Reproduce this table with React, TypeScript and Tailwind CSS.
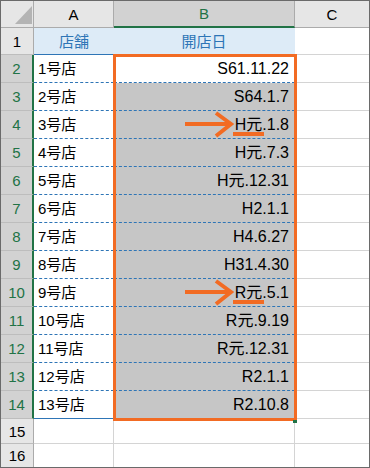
import React from 'react'

type Row = { store: string; date: string; marked?: boolean }

const ROWS: Row[] = [
  { store: '1号店', date: 'S61.11.22' },
  { store: '2号店', date: 'S64.1.7' },
  { store: '3号店', date: 'H元.1.8', marked: true },
  { store: '4号店', date: 'H元.7.3' },
  { store: '5号店', date: 'H元.12.31' },
  { store: '6号店', date: 'H2.1.1' },
  { store: '7号店', date: 'H4.6.27' },
  { store: '8号店', date: 'H31.4.30' },
  { store: '9号店', date: 'R元.5.1', marked: true },
  { store: '10号店', date: 'R元.9.19' },
  { store: '11号店', date: 'R元.12.31' },
  { store: '12号店', date: 'R2.1.1' },
  { store: '13号店', date: 'R2.10.8' },
]

// arrow + underline under the 元 era mark
function Marker() {
  return (
    <svg className="absolute left-[71px] top-0" width="82" height="28" viewBox="0 0 82 28">
      <line x1="0" y1="13" x2="45" y2="13" stroke="#f26b23" strokeWidth="4" />
      <polyline points="31,2 46,13 31,25" fill="none" stroke="#f26b23" strokeWidth="4" strokeLinejoin="miter" />
      <rect x="48" y="21" width="31" height="4" fill="#f26b23" />
    </svg>
  )
}

export default function App() {
  return (
    <div className="relative w-[370px] h-[468px] border border-[#6a6a6a] bg-white overflow-hidden font-['Liberation_Sans','Noto_Sans_CJK_JP',sans-serif] text-black">
      <div className="grid h-full grid-cols-[33px_80px_181px_1fr] grid-rows-[27px_27px_repeat(13,28px)_25px_1fr]">
        {/* column headers */}
        <div className="flex items-end justify-end pr-px pb-[3px] bg-[#e6e6e6] border-r border-b border-[#ababab]">
          <svg width="17" height="18" viewBox="0 0 17 18">
            <polygon points="17,0 17,18 0,18" fill="#b4b4b4" />
          </svg>
        </div>
        <div className="flex items-center justify-center bg-[#e6e6e6] border-r border-b border-[#ababab] text-[15px] leading-none">A</div>
        <div className="flex items-center justify-center bg-[#d2d2d2] border-r border-r-[#ababab] border-b-2 border-b-[#217346] text-[15px] leading-none text-[#217346]">B</div>
        <div className="flex items-center justify-center bg-[#e6e6e6] border-b border-[#ababab] text-[15px] leading-none">C</div>

        {/* row 1 */}
        <div className="flex items-center justify-center bg-[#e6e6e6] border-r border-r-[#ababab] border-b border-b-[#bdbdbd] text-[15px] leading-none">1</div>
        <div className="flex items-center justify-center bg-[#ddebf7] border-b border-b-[#2e75b6] text-[15px] leading-none text-[#2e75b6]">店舗</div>
        <div className="flex items-center justify-center bg-[#ddebf7] border-r border-r-[#ddebf7] border-b border-b-[#2e75b6] text-[15px] leading-none text-[#2e75b6]">開店日</div>
        <div className="border-b border-[#d4d4d4]" />

        {/* data rows 2-14 */}
        {ROWS.map((r, i) => {
          const last = i === ROWS.length - 1
          const line = last ? 'border-b border-solid border-b-[#2e75b6]' : 'border-b border-dashed border-b-[#2e75b6]'
          return (
            <React.Fragment key={i}>
              <div className="flex items-center justify-center bg-[#d2d2d2] border-r-2 border-r-[#217346] border-b border-b-[#bdbdbd] text-[15px] leading-none text-[#217346]">
                {i + 2}
              </div>
              <div className={`flex items-center pl-1 bg-white border-r border-r-[#d4d4d4] text-[15px] leading-none whitespace-nowrap ${line}`}>
                {r.store}
              </div>
              <div className={`relative flex items-center justify-end pr-[5px] border-r border-r-[#d4d4d4] text-[16px] leading-none whitespace-nowrap ${i === 0 ? 'bg-white' : 'bg-[#c6c6c6]'} ${line}`}>
                {r.marked && <Marker />}
                {r.date}
              </div>
              <div className="border-b border-[#d4d4d4]" />
            </React.Fragment>
          )
        })}

        {/* rows 15-16 */}
        {[15, 16].map(n => (
          <React.Fragment key={n}>
            <div className={`flex items-center justify-center bg-[#e6e6e6] border-r border-r-[#ababab] text-[15px] leading-none ${n === 15 ? 'border-b border-b-[#bdbdbd]' : ''}`}>{n}</div>
            <div className={`border-r border-[#d4d4d4] ${n === 15 ? 'border-b' : ''}`} />
            <div className={`border-r border-[#d4d4d4] ${n === 15 ? 'border-b' : ''}`} />
            <div className={`border-[#d4d4d4] ${n === 15 ? 'border-b' : ''}`} />
          </React.Fragment>
        ))}
      </div>

      {/* selection outline over B2:B14 */}
      <div className="absolute left-[112px] top-[53px] w-[184px] h-[367px] border-[3px] border-[#f26b23] pointer-events-none">
        <div className="absolute -right-[3px] -bottom-[5px] w-[4px] h-[3px] bg-[#217346]" />
      </div>
    </div>
  )
}
